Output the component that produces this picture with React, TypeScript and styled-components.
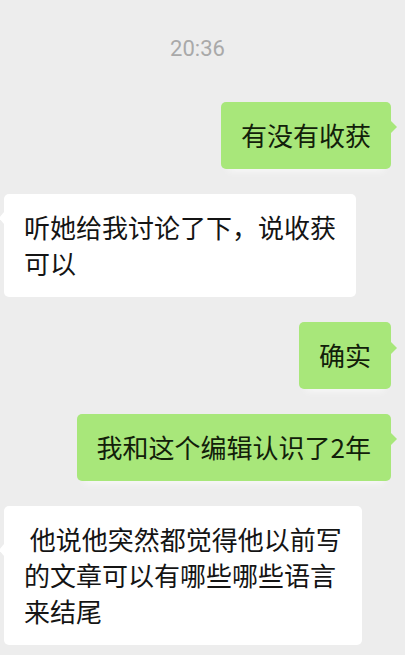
import React from "react";
import styled, { createGlobalStyle, css } from "styled-components";

const GlobalStyle = createGlobalStyle`
  html, body {
    margin: 0;
    padding: 0;
    background: #ededed;
  }
  body {
    font-family: "Noto Sans CJK SC", "Noto Sans", sans-serif;
  }
`;

const Page = styled.div`
  width: 405px;
  height: 655px;
  box-sizing: border-box;
  padding: 35px 14px 0 4px;
  background: #ededed;
  display: flex;
  flex-direction: column;
  overflow: hidden;
`;

const Time = styled.div`
  height: 28px;
  line-height: 28px;
  text-align: center;
  font-family: Roboto, "Liberation Sans", sans-serif;
  font-size: 22px;
  color: #a9a9a9;
  margin-bottom: 39px;
`;

const List = styled.div`
  display: flex;
  flex-direction: column;
  gap: 25px;
`;

const Row = styled.div<{ $mine?: boolean }>`
  display: flex;
  justify-content: ${(p) => (p.$mine ? "flex-end" : "flex-start")};
`;

const Bubble = styled.div<{ $mine?: boolean; $tail: number }>`
  position: relative;
  max-width: 330px;
  padding: 15px 20px 16px;
  border-radius: 5px;
  font-family: "Noto Sans CJK SC", "Noto Sans", sans-serif;
  font-size: 26px;
  line-height: 36px;
  white-space: pre-wrap;
  color: ${(p) => (p.$mine ? "#12200a" : "#141414")};
  background: ${(p) => (p.$mine ? "#a8e77a" : "#ffffff")};
  ${(p) =>
    p.$mine &&
    css`
      box-shadow: 0 9px 8px -7px rgba(255, 255, 255, 0.7);
    `}

  &::after {
    content: "";
    position: absolute;
    top: ${(p) => p.$tail}px;
    width: 0;
    height: 0;
    border-top: 6px solid transparent;
    border-bottom: 6px solid transparent;
    ${(p) =>
      p.$mine
        ? css`
            right: -6px;
            border-left: 6px solid #a8e77a;
          `
        : css`
            left: -5px;
            border-right: 5px solid #ffffff;
          `}
  }
`;

type Msg = { mine: boolean; text: string; tail: number };

const messages: Msg[] = [
  { mine: true, text: "有没有收获", tail: 19 },
  { mine: false, text: "听她给我讨论了下，说收获\n可以", tail: 18 },
  { mine: true, text: "确实", tail: 20 },
  { mine: true, text: "我和这个编辑认识了2年", tail: 19 },
  {
    mine: false,
    text: " 他说他突然都觉得他以前写\n的文章可以有哪些哪些语言\n来结尾",
    tail: 38,
  },
];

export default function App() {
  return (
    <>
      <GlobalStyle />
      <Page>
        <Time>20:36</Time>
        <List>
          {messages.map((m, i) => (
            <Row key={i} $mine={m.mine}>
              <Bubble $mine={m.mine} $tail={m.tail}>
                {m.text}
              </Bubble>
            </Row>
          ))}
        </List>
      </Page>
    </>
  );
}
